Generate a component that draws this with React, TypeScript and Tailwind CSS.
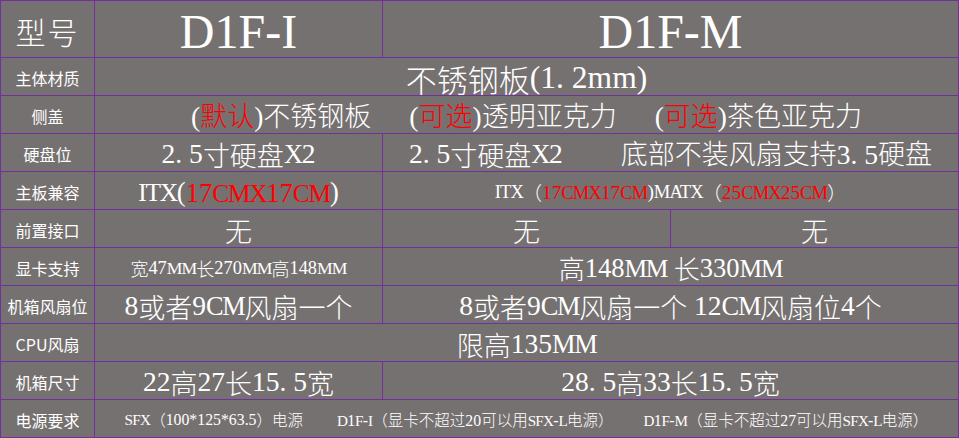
import React from 'react';

// ASCII runs use a thin serif, close to the half-width SimSun glyphs in the sheet;
// capital letters are squeezed a little since SimSun keeps them half-width too
function Ascii({ s }: { s: string }) {
  const parts = s.split(/([A-Z]+)/).filter((p) => p !== '');
  return (
    <span className="font-['Liberation_Serif',serif] text-[1.02em] whitespace-pre">
      {parts.map((p, i) =>
        /^[A-Z]+$/.test(p) ? (
          <span key={i} className="text-[0.96em] tracking-[-0.05em]">
            {p}
          </span>
        ) : (
          <span key={i}>{p}</span>
        )
      )}
    </span>
  );
}

function T({ s }: { s: string }) {
  const parts = s.split(/([\x20-\x7e]+)/).filter((p) => p !== '');
  return (
    <>
      {parts.map((p, i) => (/^[\x20-\x7e]+$/.test(p) ? <Ascii key={i} s={p} /> : <span key={i}>{p}</span>))}
    </>
  );
}

function R({ s }: { s: string }) {
  return (
    <span className="text-[#ff0000]">
      <T s={s} />
    </span>
  );
}

function Label({ children }: { children: React.ReactNode }) {
  return (
    <div className="bg-[#767171] flex items-center justify-center text-white text-[16px] leading-none font-['Noto_Sans_CJK_SC',sans-serif] pt-[2px]">
      {children}
    </div>
  );
}

function Cell({ children, className = '' }: { children: React.ReactNode; className?: string }) {
  return (
    <div
      className={`bg-[#767171] flex items-center justify-center text-white leading-none whitespace-nowrap font-['Noto_Sans_CJK_SC',sans-serif] font-light pt-[3px] ${className}`}
    >
      {children}
    </div>
  );
}

export default function App() {
  return (
    <div className="w-[959px] h-[438px] bg-[#767171]">
      <div className="grid grid-cols-[93px_287px_287px_287px] grid-rows-[56px_repeat(10,37px)] gap-px p-px bg-[#7030a0] w-[959px]">
        <div className="bg-[#767171] flex items-center justify-center text-white text-[30px] leading-none font-['Noto_Sans_CJK_SC',sans-serif] font-light pt-[4px] tracking-[2px]">
          型号
        </div>
        <div className="bg-[#767171] flex items-center justify-center text-white text-[48px] leading-none font-['Liberation_Serif',serif] pt-[6px]">
          D1F-I
        </div>
        <div className="col-span-2 bg-[#767171] flex items-center justify-center text-white text-[48px] leading-none font-['Liberation_Serif',serif] pt-[6px]">
          D1F-M
        </div>

        <Label>主体材质</Label>
        <Cell className="col-span-3 text-[31px]">
          <T s="不锈钢板(1. 2mm)" />
        </Cell>

        <Label>侧盖</Label>
        <Cell className="col-span-3 text-[27px]">
          <span>
            <T s="(" />
            <R s="默认" />
            <T s=")不锈钢板" />
          </span>
          <span className="ml-[38px]">
            <T s="(" />
            <R s="可选" />
            <T s=")透明亚克力" />
          </span>
          <span className="ml-[38px]">
            <T s="(" />
            <R s="可选" />
            <T s=")茶色亚克力" />
          </span>
        </Cell>

        <Label>硬盘位</Label>
        <Cell className="text-[27px]">
          <T s="2. 5寸硬盘X2" />
        </Cell>
        <Cell className="col-span-2 text-[27px]">
          <T s="2. 5寸硬盘X2" />
          <span className="ml-[58px]">
            <T s="底部不装风扇支持3. 5硬盘" />
          </span>
        </Cell>

        <Label>主板兼容</Label>
        <Cell className="text-[26px]">
          <T s="ITX(" />
          <R s="17CMX17CM" />
          <T s=")" />
        </Cell>
        <Cell className="col-span-2 text-[19px]">
          <T s="ITX（" />
          <R s="17CMX17CM" />
          <T s=")MATX（" />
          <R s="25CMX25CM" />
          <T s="）" />
        </Cell>

        <Label>前置接口</Label>
        <Cell className="text-[27px]">无</Cell>
        <Cell className="text-[27px]">无</Cell>
        <Cell className="text-[27px]">无</Cell>

        <Label>显卡支持</Label>
        <Cell className="text-[18px]">
          <T s="宽47MM长270MM高148MM" />
        </Cell>
        <Cell className="col-span-2 text-[26px]">
          <T s="高148MM 长330MM" />
        </Cell>

        <Label>机箱风扇位</Label>
        <Cell className="text-[27px]">
          <T s="8或者9CM风扇一个" />
        </Cell>
        <Cell className="col-span-2 text-[27px]">
          <T s="8或者9CM风扇一个 12CM风扇位4个" />
        </Cell>

        <Label>CPU风扇</Label>
        <Cell className="col-span-3 text-[27px]">
          <T s="限高135MM" />
        </Cell>

        <Label>机箱尺寸</Label>
        <Cell className="text-[27px]">
          <T s="22高27长15. 5宽" />
        </Cell>
        <Cell className="col-span-2 text-[27px]">
          <T s="28. 5高33长15. 5宽" />
        </Cell>

        <Label>电源要求</Label>
        <Cell className="col-span-3 text-[15.5px]">
          <T s="SFX（100*125*63.5）电源" />
          <span className="ml-[34px]">
            <T s="D1F-I（显卡不超过20可以用SFX-L电源）" />
          </span>
          <span className="ml-[30px]">
            <T s="D1F-M（显卡不超过27可以用SFX-L电源）" />
          </span>
        </Cell>
      </div>
    </div>
  );
}
